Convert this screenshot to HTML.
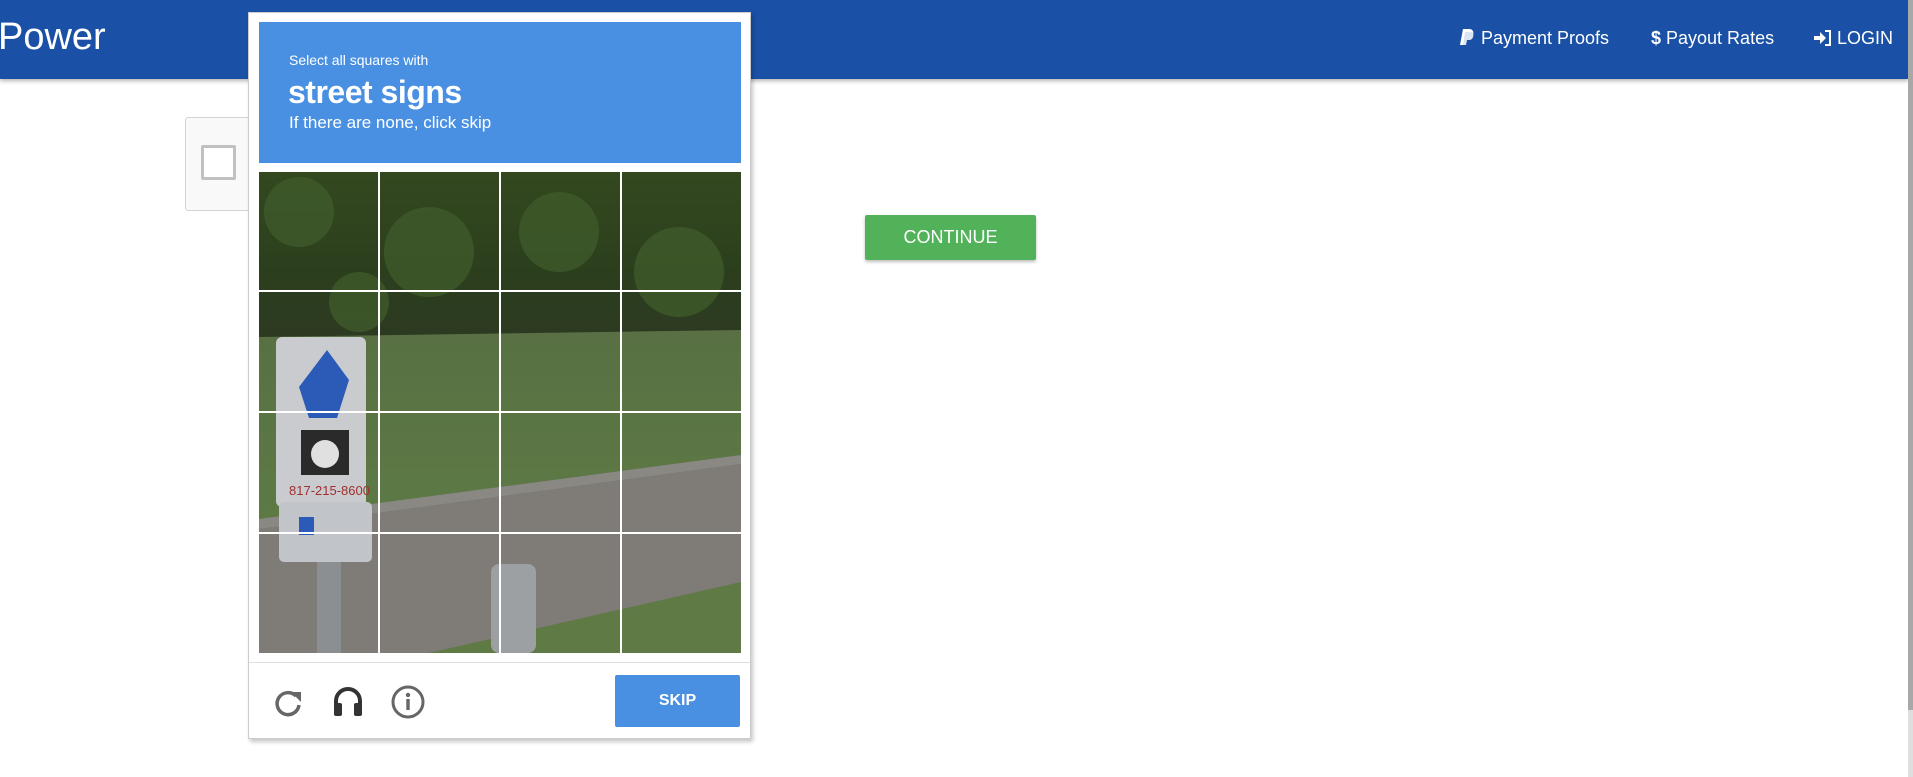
<!DOCTYPE html>
<html><head><meta charset="utf-8"><style>
*{margin:0;padding:0;box-sizing:border-box}
html,body{width:1913px;height:777px;overflow:hidden;background:#fff;font-family:"Liberation Sans",Arial,sans-serif;position:relative}
.nav{position:absolute;left:0;top:0;width:1908px;height:79px;background:#1a51a6;box-shadow:0 2px 4px rgba(0,0,0,.3)}
.brand{position:absolute;left:-2px;top:16px;color:#fff;font-size:38px}
.link{position:absolute;top:28px;color:#fff;font-size:18px;white-space:nowrap}
.sb{position:absolute;left:1908px;top:0;width:5px;height:710px;background:#a8a8a8}
.sb2{position:absolute;left:1908px;top:710px;width:5px;height:67px;background:#dedede}
.card{position:absolute;left:185px;top:117px;width:70px;height:94px;background:#f9f9f9;border:1px solid #d3d3d3;border-radius:3px}
.cb{position:absolute;left:201px;top:145px;width:35px;height:35px;border:3px solid #c1c1c1;border-radius:2px;background:#fff}
.pop{position:absolute;left:248px;top:12px;width:503px;height:727px;background:#fff;border:1px solid #ccc;box-shadow:2px 3px 4px rgba(0,0,0,.22)}
.hd{position:absolute;left:259px;top:22px;width:482px;height:141px;background:#4a90e2;color:#fff}
.cont{position:absolute;left:865px;top:215px;width:171px;height:45px;background:#52b25a;border-radius:2px;color:#fff;font-size:18px;text-align:center;line-height:45px;box-shadow:0 2px 3px rgba(0,0,0,.25)}
.skip{position:absolute;left:615px;top:675px;width:125px;height:52px;background:#4a90e2;border-radius:2px;color:#fff;font-weight:bold;font-size:16px;text-align:center;line-height:52px}
</style></head><body>
<div class="nav">
<div class="brand">Power</div>
<div class="link" style="left:1460px"><svg width="16" height="18" viewBox="0 0 16 18" style="vertical-align:-2px"><path d="M3 1h6c4 0 5 3 4 6s-4 4-6 4H5l-1 6H0z" fill="#fff"/><path d="M5 4h5c3 0 4 2 3 5s-3 3-5 3H7l-1 5H3z" fill="#dbe4f3"/></svg> Payment Proofs</div>
<div class="link" style="left:1651px"><b>$</b> Payout Rates</div>
<div class="link" style="left:1814px"><svg width="18" height="16" viewBox="0 0 18 16" style="vertical-align:-2px"><path d="M0 6h6V2l6 6-6 6v-4H0z" fill="#fff"/><path d="M11 1h5v14h-5" fill="none" stroke="#fff" stroke-width="2"/></svg> LOGIN</div>
</div>
<div class="sb"></div><div class="sb2"></div>
<div class="card"></div><div class="cb"></div>
<div class="cont">CONTINUE</div>
<div class="pop"></div>
<div class="hd">
<div style="position:absolute;left:30px;top:30px;font-size:14px">Select all squares with</div>
<div style="position:absolute;left:29px;top:52px;font-size:32px;font-weight:bold;letter-spacing:-0.5px">street signs</div>
<div style="position:absolute;left:30px;top:91px;font-size:17px">If there are none, click skip</div>
</div>
<svg style="position:absolute;left:259px;top:172px" width="482" height="481" viewBox="0 0 482 481">
<defs><linearGradient id="tr" x1="0" y1="0" x2="0" y2="1"><stop offset="0" stop-color="#33481f"/><stop offset=".6" stop-color="#2c3f1d"/><stop offset="1" stop-color="#2d3a22"/></linearGradient>
<linearGradient id="gr" x1="0" y1="0" x2="0" y2="1"><stop offset="0" stop-color="#587043"/><stop offset="1" stop-color="#5d7a45"/></linearGradient></defs>
<rect width="482" height="481" fill="#6d6a65"/>
<rect width="482" height="165" fill="url(#tr)"/>
<g fill="#3e5a2a" opacity=".8"><circle cx="40" cy="40" r="35"/><circle cx="170" cy="80" r="45"/><circle cx="300" cy="60" r="40"/><circle cx="420" cy="100" r="45"/><circle cx="100" cy="130" r="30"/></g>
<polygon points="0,165 482,158 482,283 0,347" fill="url(#gr)"/>
<polygon points="0,347 482,283 482,292 0,357" fill="#8a8883"/>
<polygon points="0,357 482,292 482,410 170,481 0,481" fill="#7f7c78"/>
<polygon points="170,481 482,410 482,481" fill="#5f7a44"/>
<rect x="58" y="388" width="24" height="93" fill="#8c8f92"/>
<rect x="17" y="165" width="90" height="170" rx="6" fill="#c9cbcf"/>
<polygon points="68,178 90,208 78,246 50,246 40,215" fill="#2b5bb6"/>
<rect x="42" y="258" width="48" height="45" fill="#2a2a2a"/><circle cx="66" cy="282" r="14" fill="#e0e0e0"/>
<text x="30" y="323" font-size="13" fill="#a03030" font-family="Liberation Sans">817-215-8600</text>
<rect x="20" y="330" width="93" height="60" rx="5" fill="#c1c4c8"/>
<rect x="40" y="345" width="15" height="18" fill="#2b5bb6"/>
<rect x="232" y="392" width="45" height="89" rx="8" fill="#9ca0a3"/>
<g fill="#fff"><rect x="119" y="0" width="2" height="481"/><rect x="240" y="0" width="2" height="481"/><rect x="361" y="0" width="2" height="481"/>
<rect x="0" y="118" width="482" height="2"/><rect x="0" y="239" width="482" height="2"/><rect x="0" y="360" width="482" height="2"/></g>
</svg>
<div style="position:absolute;left:249px;top:662px;width:501px;height:1px;background:#dfdfdf"></div>
<svg style="position:absolute;left:272px;top:686px" width="32" height="32" viewBox="0 0 32 32"><path d="M24 10A11 11 0 1 0 27 19" fill="none" stroke="#666" stroke-width="3.5"/><path d="M19 6h10v10z" fill="#666"/></svg>
<svg style="position:absolute;left:332px;top:684px" width="32" height="34" viewBox="0 0 32 34"><path d="M4 28V17a12 12 0 0 1 24 0v11" fill="none" stroke="#333" stroke-width="4"/><rect x="2" y="19" width="8" height="13" rx="2" fill="#333"/><rect x="22" y="19" width="8" height="13" rx="2" fill="#333"/></svg>
<svg style="position:absolute;left:391px;top:685px" width="34" height="34" viewBox="0 0 34 34"><circle cx="17" cy="17" r="15" fill="none" stroke="#666" stroke-width="3"/><circle cx="17" cy="10" r="2.2" fill="#666"/><rect x="15.3" y="14" width="3.4" height="11" fill="#666"/></svg>
<div class="skip">SKIP</div>
</body></html>
